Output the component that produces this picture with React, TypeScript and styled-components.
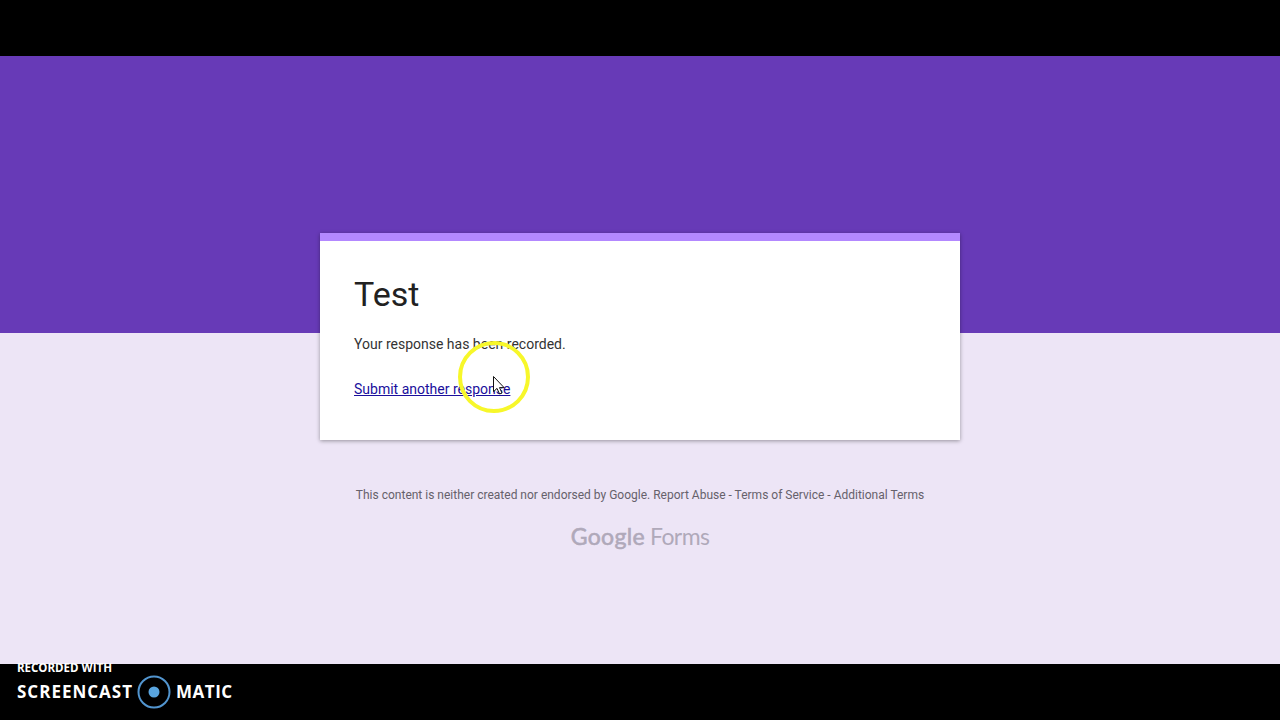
import React from "react";
import styled, { createGlobalStyle } from "styled-components";

const App = () => {
  return (
    <>
      <GlobalStyle />
      <Screen>
        <FormPage>
          <Card>
            <CardStripe />
            <CardBody>
              <Title>Test</Title>
              <Message>Your response has been recorded.</Message>
              <ResubmitLink href="#">Submit another response</ResubmitLink>
            </CardBody>
          </Card>
          <Disclaimer>
            This content is neither created nor endorsed by Google.{" "}
            <FooterLink href="#">Report Abuse</FooterLink> -{" "}
            <FooterLink href="#">Terms of Service</FooterLink> -{" "}
            <FooterLink href="#">Additional Terms</FooterLink>
          </Disclaimer>
          <Logo>
            <LogoGoogle>Google</LogoGoogle>
            <LogoForms>Forms</LogoForms>
          </Logo>
        </FormPage>

        <Watermark>
          <RecordedWith>RECORDED WITH</RecordedWith>
          <Brand>
            <BrandWord $spacing="1px">SCREENCAST</BrandWord>
            <RecordIcon width="34" height="34" viewBox="0 0 34 34">
              <circle cx="17" cy="17" r="15.5" fill="none" stroke="#5295cf" strokeWidth="2" />
              <circle cx="17" cy="17" r="5.5" fill="#59a5e0" />
            </RecordIcon>
            <BrandWord $spacing="0.5px">MATIC</BrandWord>
          </Brand>
        </Watermark>

        <Highlight />
        <Cursor width="14" height="21" viewBox="0 0 14 21">
          <path
            d="M1.5 1.5v15.2l3.5-3.3 2.6 5.6 2.4-1-2.5-5.4h4.6z"
            fill="#fff"
            stroke="#111"
            strokeWidth="1"
          />
        </Cursor>
      </Screen>
    </>
  );
};

export default App;

const GlobalStyle = createGlobalStyle`
  body {
    margin: 0;
    background: #000;
    overflow: hidden;
  }
`;

const Screen = styled.div`
  position: relative;
  display: flex;
  flex-direction: column;
  box-sizing: border-box;
  width: 1280px;
  height: 720px;
  padding-top: 56px;
  background: #000;
  overflow: hidden;
  font-family: Roboto, "Liberation Sans", sans-serif;
`;

const FormPage = styled.main`
  display: flex;
  flex-direction: column;
  align-items: center;
  box-sizing: border-box;
  flex: 0 0 608px;
  padding-top: 177px;
  background: linear-gradient(#673ab7 277px, #ede5f6 277px);
`;

const Card = styled.section`
  width: 640px;
  height: 207px;
  background: #fff;
  box-shadow: 0 1px 4px rgba(0, 0, 0, 0.37);
`;

const CardStripe = styled.div`
  height: 8px;
  background: #b388ff;
`;

const CardBody = styled.div`
  display: flex;
  flex-direction: column;
  align-items: flex-start;
  padding: 30px 34px 0;
`;

const Title = styled.h1`
  margin: 0;
  font-size: 34px;
  font-weight: 400;
  line-height: 46px;
  color: #212121;
`;

const Message = styled.p`
  margin: 17px 0 0;
  font-size: 14px;
  line-height: 20px;
  color: #333;
`;

const ResubmitLink = styled.a`
  margin-top: 25px;
  font-size: 14px;
  line-height: 20px;
  color: #1a0f9c;
`;

const Disclaimer = styled.p`
  margin: 47px 0 0;
  font-size: 12px;
  line-height: 16px;
  color: #66616b;
  white-space: nowrap;
`;

const FooterLink = styled.a`
  color: inherit;
  text-decoration: none;
`;

const Logo = styled.div`
  display: flex;
  align-items: baseline;
  gap: 5px;
  margin-top: 17px;
  font-family: Lato, sans-serif;
  font-size: 23px;
  line-height: 32px;
  color: #b0a9ba;
`;

const LogoGoogle = styled.span`
  font-weight: 400;
  letter-spacing: 0.35px;
  -webkit-text-stroke: 0.6px #b0a9ba;
`;

const LogoForms = styled.span`
  font-weight: 400;
  letter-spacing: -0.6px;
`;

// the first line rides slightly over the bottom edge of the page
const Watermark = styled.footer`
  display: flex;
  flex-direction: column;
  padding-left: 17px;
  margin-top: -3px;
  font-family: "Open Sans", sans-serif;
  font-weight: 700;
  color: #fff;
`;

const RecordedWith = styled.span`
  font-size: 11.5px;
  line-height: 14px;
`;

const Brand = styled.div`
  display: flex;
  align-items: center;
`;

const BrandWord = styled.span<{ $spacing: string }>`
  font-size: 17px;
  line-height: 34px;
  letter-spacing: ${({ $spacing }) => $spacing};
`;

const RecordIcon = styled.svg`
  margin: 0 5px 0 4px;
`;

const Highlight = styled.div`
  position: absolute;
  top: 341px;
  left: 458px;
  box-sizing: border-box;
  width: 72px;
  height: 72px;
  border: 4px solid #f7f72a;
  border-radius: 50%;
`;

const Cursor = styled.svg`
  position: absolute;
  top: 375px;
  left: 492px;
`;
